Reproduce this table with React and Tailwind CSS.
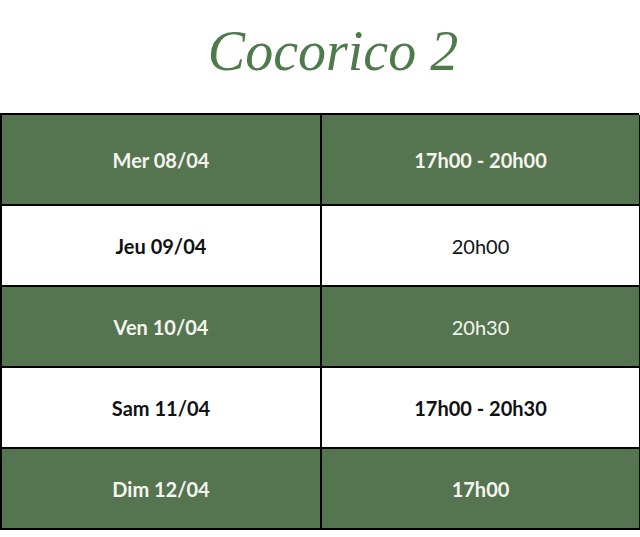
const rows = [
  { day: "Mer 08/04", time: "17h00 - 20h00", green: true, boldTime: true, h: "h-[91px]" },
  { day: "Jeu 09/04", time: "20h00", green: false, boldTime: false, h: "h-[81px]" },
  { day: "Ven 10/04", time: "20h30", green: true, boldTime: false, h: "h-[81px]" },
  { day: "Sam 11/04", time: "17h00 - 20h30", green: false, boldTime: true, h: "h-[81px]" },
  { day: "Dim 12/04", time: "17h00", green: true, boldTime: true, h: "h-[81px]" },
];

export default function App() {
  return (
    <div className="w-[640px] h-[537px] bg-white overflow-hidden">
      <div className="h-[113px] flex items-center justify-center pb-[12px] pl-[26px]">
        <h1 className="font-['Liberation_Serif',serif] italic text-[56px] leading-none text-[#4f7a4c] tracking-[0px]">
          Cocorico 2
        </h1>
      </div>
      <div className="w-[639px] border-t-2 border-l-2 border-black font-['Lato',sans-serif] text-[20px]">
        {rows.map((r) => (
          <div key={r.day} className={`grid grid-cols-[320px_319px] ${r.h}`}>
            <div
              className={`flex items-center justify-center border-r-2 border-b-2 border-black font-bold ${
                r.green ? "bg-[#557450] text-[#f5f5ef]" : "bg-white text-[#111]"
              }`}
            >
              {r.day}
            </div>
            <div
              className={`flex items-center justify-center border-r-2 border-b-2 border-black ${
                r.boldTime ? "font-bold" : "font-normal"
              } ${r.green ? "bg-[#557450] text-[#f5f5ef]" : "bg-white text-[#111]"}`}
            >
              {r.time}
            </div>
          </div>
        ))}
      </div>
    </div>
  );
}
